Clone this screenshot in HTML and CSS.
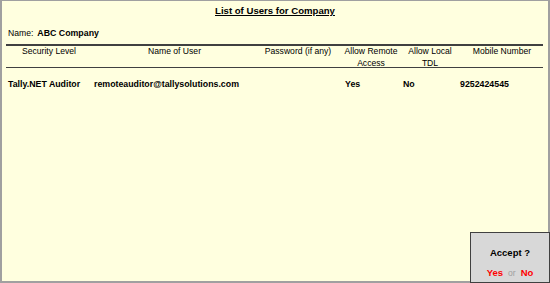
FILE: index.html
```html
<!DOCTYPE html>
<html>
<head>
<meta charset="utf-8">
<link rel="stylesheet" href="styles.css">
</head>
<body>
<div class="frame">
  <div class="title-row"><span class="title">List of Users for Company</span></div>
  <div class="name-row"><span class="label">Name:</span><span class="company">ABC Company</span></div>
  <div class="rule thick"></div>
  <div class="grid head">
    <div class="c1">Security Level</div>
    <div class="c2">Name of User</div>
    <div class="c3">Password (if any)</div>
    <div class="c4">Allow Remote<br>Access</div>
    <div class="c5">Allow Local<br>TDL</div>
    <div class="c6">Mobile Number</div>
  </div>
  <div class="rule thin"></div>
  <div class="grid data">
    <div class="c1">Tally.NET Auditor</div>
    <div class="c2">remoteauditor@tallysolutions.com</div>
    <div class="c3"></div>
    <div class="c4">Yes</div>
    <div class="c5">No</div>
    <div class="c6">9252424545</div>
  </div>
  <div class="accept">
    <div class="q">Accept ?</div>
    <div class="opts"><span class="red">Yes</span><span class="or">or</span><span class="red">No</span></div>
  </div>
</div>
</body>
</html>
```
FILE: styles.css
```css
html, body { margin: 0; padding: 0; }
body { width: 550px; height: 283px; overflow: hidden; font-family: "Liberation Sans", Arial, sans-serif; color: #000; }
.frame {
  position: relative;
  box-sizing: border-box;
  width: 550px; height: 283px;
  background: #ffffdf;
  border-top: 1px solid #a0a0a0;
  border-left: 2px solid #a0a0a0;
  border-right: 2px solid #a0a0a0;
  border-bottom: 2px solid #a0a0a0;
  padding-left: 4px;
}
.title-row { height: 16px; display: flex; justify-content: center; align-items: flex-end; padding-right: 4px; }
.title { font-weight: bold; font-size: 9.6px; text-decoration: underline; line-height: 12px; }
.name-row { height: 26px; display: flex; align-items: center; gap: 4px; padding-left: 2px; padding-top: 6px; box-sizing: border-box; font-size: 8.6px; }
.company { font-weight: bold; font-size: 8.8px; }
.rule { width: 537px; background: #404040; }
.thick { height: 2px; margin-top: 1px; }
.thin { height: 1px; }
.grid { display: grid; grid-template-columns: 86px 165px 82px 64px 54px 90px; }
.head { font-size: 8.6px; line-height: 12px; text-align: center; margin-top: -1px; height: 22px; }
.data { font-size: 8.8px; font-weight: bold; line-height: 12px; padding-top: 10px; }
.data .c1 { padding-left: 2px; }
.data .c2 { padding-left: 2px; }
.data .c4 { padding-left: 6px; }
.data .c5 { padding-left: 0; }
.data .c6 { padding-left: 3px; }
.accept {
  position: absolute;
  right: -2px; bottom: -2px;
  width: 80px; height: 51px;
  box-sizing: border-box;
  background: #d8d8d8;
  border: 1px solid #404040;
  display: flex; flex-direction: column; align-items: center;
}
.q { font-weight: bold; font-size: 9.5px; margin-top: 14px; line-height: 12px; }
.opts { margin-top: 8px; font-size: 9.5px; line-height: 12px; display: flex; gap: 5px; }
.red { color: #ff0000; font-weight: bold; }
.or { color: #a0a0a0; font-size: 8.6px; }
```
